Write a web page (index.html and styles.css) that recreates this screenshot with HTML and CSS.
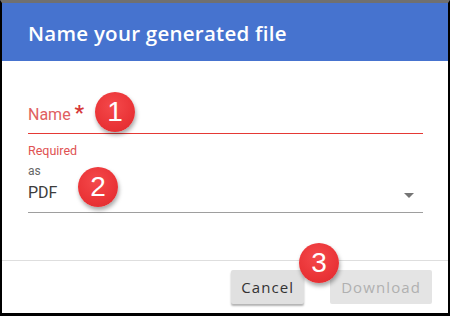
FILE: index.html
```html
<!DOCTYPE html>
<html>
<head>
<meta charset="utf-8">
<link rel="stylesheet" href="styles.css">
</head>
<body>
<div class="frame">
  <div class="header">
    <h1 class="title">Name your generated file</h1>
  </div>
  <div class="content">
    <div class="field field-error">
      <div class="label">Name <span class="star">*</span></div>
    </div>
    <div class="hint">Required</div>
    <div class="small-label">as</div>
    <div class="field select">
      <span class="value">PDF</span>
      <span class="caret"></span>
    </div>
  </div>
  <div class="footer">
    <button class="btn btn-cancel">Cancel</button>
    <button class="btn btn-disabled">Download</button>
  </div>
  <div class="badge badge-1">1</div>
  <div class="badge badge-2">2</div>
  <div class="badge badge-3">3</div>
</div>
</body>
</html>
```
FILE: styles.css
```css
html, body {
  margin: 0;
  padding: 0;
  background: #000;
}
.frame {
  position: relative;
  box-sizing: border-box;
  width: 450px;
  height: 316px;
  border-top: 3px solid #707070;
  border-left: 2px solid #000;
  border-right: 2px solid #000;
  border-bottom: 3px solid #000;
  background: #fff;
  display: flex;
  flex-direction: column;
  overflow: hidden;
}
.header {
  height: 58px;
  box-sizing: border-box;
  background: #4673cf;
  padding: 17px 0 0 26px;
}
.title {
  margin: 0;
  font-family: "Open Sans", sans-serif;
  font-weight: 600;
  font-size: 20.5px;
  line-height: 27px;
  color: #fff;
  letter-spacing: 0.25px;
}
.content {
  height: 199px;
  box-sizing: border-box;
  padding: 44px 25px 0 26px;
  font-family: Roboto, sans-serif;
}
.field {
  padding-bottom: 8px;
  border-bottom: 1px solid #9e9e9e;
}
.field.field-error {
  border-bottom: 1px solid #e53935;
}
.label {
  font-size: 16px;
  line-height: 20px;
  height: 20px;
  color: #e06060;
}
.star {
  color: #d63838;
  font-size: 21px;
  font-weight: 700;
  line-height: 16px;
  vertical-align: top;
}
.hint {
  margin-top: 9px;
  font-size: 12.5px;
  line-height: 16px;
  color: #e05252;
}
.small-label {
  margin-top: 4px;
  font-size: 12px;
  line-height: 16px;
  color: #666;
}
.select {
  margin-top: 4px;
  padding-bottom: 9px;
  display: flex;
  justify-content: space-between;
  align-items: flex-start;
}
.value {
  font-size: 16px;
  line-height: 20px;
  color: #3c3c3c;
}
.caret {
  width: 0;
  height: 0;
  margin: 10px 9px 0 0;
  border-left: 5px solid transparent;
  border-right: 5px solid transparent;
  border-top: 5px solid #757575;
}
.footer {
  flex: 1;
  border-top: 1px solid #dedede;
  display: flex;
  justify-content: flex-end;
  align-items: flex-start;
  gap: 26px;
  padding: 9px 16px 0 0;
}
.btn {
  height: 34px;
  border: 0;
  border-radius: 2px;
  padding: 1px 10px 0;
  font-family: "Open Sans", sans-serif;
  font-size: 15px;
  letter-spacing: 1.1px;
  line-height: 33px;
}
.btn-cancel {
  background: #e0e0e0;
  color: #333;
  box-shadow: 0 2px 2px rgba(0, 0, 0, 0.3);
}
.btn-disabled {
  background: #e4e4e4;
  color: #b0b0b0;
  padding: 1px 11px 0;
}
.badge {
  position: absolute;
  width: 40px;
  height: 40px;
  border-radius: 50%;
  background: radial-gradient(circle at 45% 35%, #f4494b 0%, #ea3437 60%, #dc2a2e 100%);
  box-shadow: 1px 3px 4px rgba(0, 0, 0, 0.35);
  color: #fff;
  font-family: "Liberation Sans", Arial, sans-serif;
  font-size: 28px;
  line-height: 40px;
  text-align: center;
}
.badge-1 { left: 93px; top: 89px; }
.badge-2 { left: 76px; top: 164px; }
.badge-3 { left: 297px; top: 240px; }
```
